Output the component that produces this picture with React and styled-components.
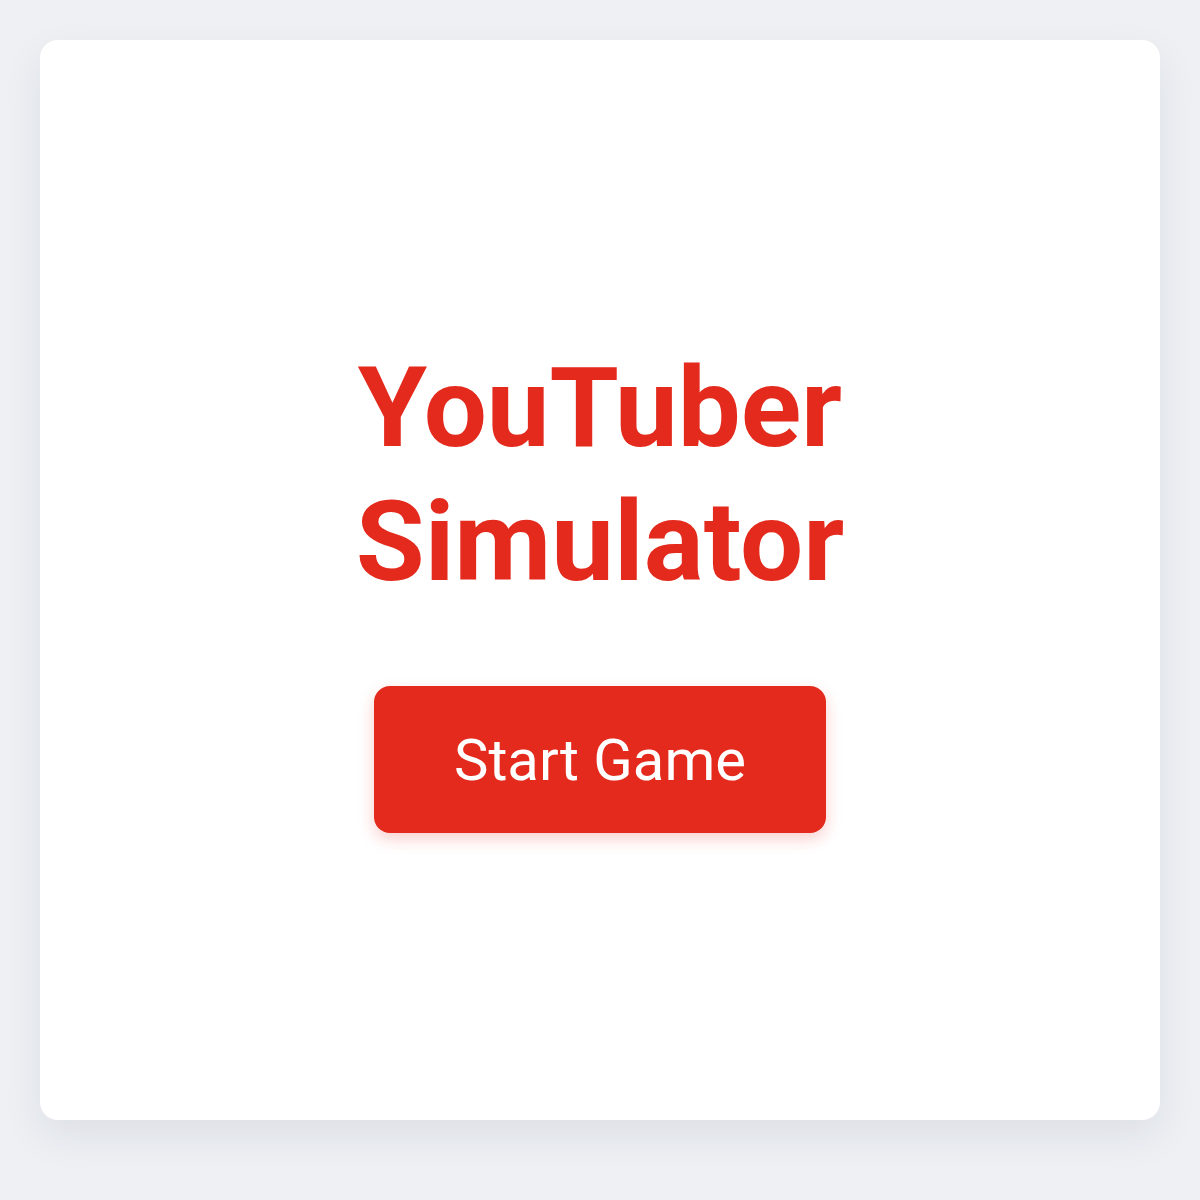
import React from "react";
import styled, { createGlobalStyle } from "styled-components";

const GlobalStyle = createGlobalStyle`
  html, body {
    margin: 0;
    padding: 0;
    background: #eef0f4;
    font-family: Roboto, "Liberation Sans", sans-serif;
  }
`;

const Page = styled.div`
  box-sizing: border-box;
  width: 100%;
  height: 1200px;
  padding: 40px 40px 80px;
  display: flex;
`;

const Card = styled.div`
  flex: 1;
  background: #ffffff;
  border-radius: 18px;
  box-shadow: 0 16px 40px rgba(30, 40, 60, 0.08);
  display: flex;
  flex-direction: column;
  align-items: center;
  justify-content: center;
  padding-top: 14px;
`;

const Title = styled.h1`
  margin: 0 0 77px;
  font-size: 112px;
  line-height: 1.2;
  font-weight: 700;
  color: #e42a1d;
  text-align: center;
`;

const Button = styled.button`
  width: 452px;
  height: 147px;
  border: none;
  border-radius: 16px;
  background: #e42a1d;
  color: #ffffff;
  font-family: Roboto, "Liberation Sans", sans-serif;
  font-size: 58px;
  font-weight: 400;
  cursor: pointer;
  box-shadow: 0 6px 16px rgba(228, 42, 29, 0.22);
`;

const App = () => {
  return (
    <>
      <GlobalStyle />
      <Page>
        <Card>
          <Title>
            YouTuber
            <br />
            Simulator
          </Title>
          <Button>Start Game</Button>
        </Card>
      </Page>
    </>
  );
};

export default App;
